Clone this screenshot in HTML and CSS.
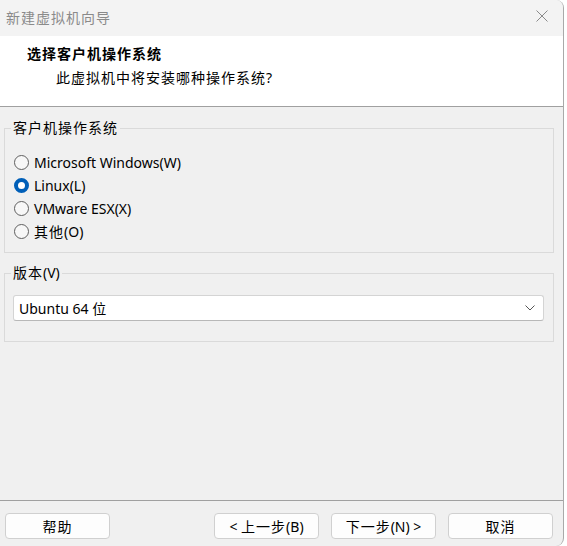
FILE: index.html
```html
<!DOCTYPE html>
<html lang="zh-CN">
<head>
<meta charset="utf-8">
<title>新建虚拟机向导</title>
<link rel="stylesheet" href="styles.css">
</head>
<body>
<div class="window">
  <div class="titlebar">
    <span class="title cjk">新建虚拟机向导</span>
    <svg class="close" width="12" height="12" viewBox="0 0 12 12"><path d="M0.5 0.5 L11.5 11.5 M11.5 0.5 L0.5 11.5" stroke="#8a8a8a" stroke-width="1" fill="none"/></svg>
  </div>
  <div class="header">
    <div class="h-title cjk">选择客户机操作系统</div>
    <div class="h-sub"><span class="cjk">此虚拟机中将安装哪种操作系统</span>?</div>
  </div>
  <div class="content">
    <fieldset class="group group-os">
      <legend class="cjk">客户机操作系统</legend>
      <div class="radio"><span class="dot"></span><span>Microsoft Windows(W)</span></div>
      <div class="radio"><span class="dot checked"></span><span>Linux(L)</span></div>
      <div class="radio"><span class="dot"></span><span>VMware ESX(X)</span></div>
      <div class="radio"><span class="dot"></span><span><span class="cjk">其他</span>(O)</span></div>
    </fieldset>
    <fieldset class="group group-ver">
      <legend><span class="cjk">版本</span>(V)</legend>
      <div class="select">
        <span>Ubuntu 64 位</span>
        <svg class="chev" width="10" height="6" viewBox="0 0 10 6"><path d="M0.5 0.5 L5 5 L9.5 0.5" stroke="#555" stroke-width="1" fill="none"/></svg>
      </div>
    </fieldset>
  </div>
  <div class="footer">
    <button class="btn"><span class="cjk">帮助</span></button>
    <div class="nav">
      <button class="btn">&lt; <span class="cjk">上一步</span>(B)</button>
      <button class="btn"><span class="cjk">下一步</span>(N) &gt;</button>
      <button class="btn"><span class="cjk">取消</span></button>
    </div>
  </div>
</div>
</body>
</html>
```
FILE: styles.css
```css
* { box-sizing: border-box; }
html, body { margin: 0; padding: 0; background: #ffffff; }
body {
  font-family: "Noto Sans", "Noto Sans CJK SC", sans-serif;
  font-size: 14px;
  color: #000;
}
.cjk { letter-spacing: 1px; }
.window {
  width: 564px;
  height: 546px;
  background: #f0f0f0;
  border-right: 1px solid #a9a9a9;
  border-radius: 0 8px 8px 0;
  display: flex;
  flex-direction: column;
  overflow: hidden;
}
.titlebar {
  height: 36px;
  background: #f3f3f3;
  display: flex;
  align-items: center;
  justify-content: space-between;
  padding: 0 15px 0 6px;
}
.title { color: #8a8a8a; font-size: 14px; line-height: 16px; }
.close { display: block; margin-top: -4px; }
.header {
  height: 71px;
  background: #ffffff;
  border-bottom: 1px solid #a0a0a0;
  padding: 9px 0 0 27px;
}
.h-title { font-weight: bold; line-height: 18px; }
.h-sub { padding-left: 29px; margin-top: 6px; line-height: 18px; }
.content {
  flex: 1;
  padding: 13px 0 0 4px;
}
.group {
  width: 550px;
  margin: 0;
  border: 1px solid #dadada;
  padding: 0 9px 0 8px;
}
.group legend {
  padding: 0 2px;
  margin-left: -2px;
  line-height: 16px;
}
.group-os { padding-top: 15px; padding-bottom: 9px; }
.radio {
  height: 23px;
  display: flex;
  align-items: center;
  gap: 5px;
  line-height: 16px;
}
.dot {
  width: 15px;
  height: 15px;
  border-radius: 50%;
  border: 1px solid #5f5f5f;
  background: #f7f7f7;
  margin-left: 1px;
  flex: none;
}
.dot.checked {
  border: 4.5px solid #005fb8;
  background: #ffffff;
}
.group-ver { margin-top: 12px; padding-top: 14px; padding-bottom: 20px; }
.select {
  height: 26px;
  background: #ffffff;
  border: 1px solid #d4d4d4;
  border-bottom-color: #b8b8b8;
  border-radius: 3px;
  display: flex;
  align-items: center;
  justify-content: space-between;
  padding: 0 8px 0 5px;
}
.chev { display: block; }
.footer {
  height: 46px;
  border-top: 1px solid #a0a0a0;
  display: flex;
  justify-content: space-between;
  padding: 12px 10px 0 5px;
}
.nav { display: flex; gap: 12px; }
.btn {
  width: 105px;
  height: 26px;
  background: #fdfdfd;
  border: 1px solid #d0d0d0;
  border-radius: 4px;
  font-family: inherit;
  font-size: 14px;
  color: #000;
  padding: 0;
}
```
